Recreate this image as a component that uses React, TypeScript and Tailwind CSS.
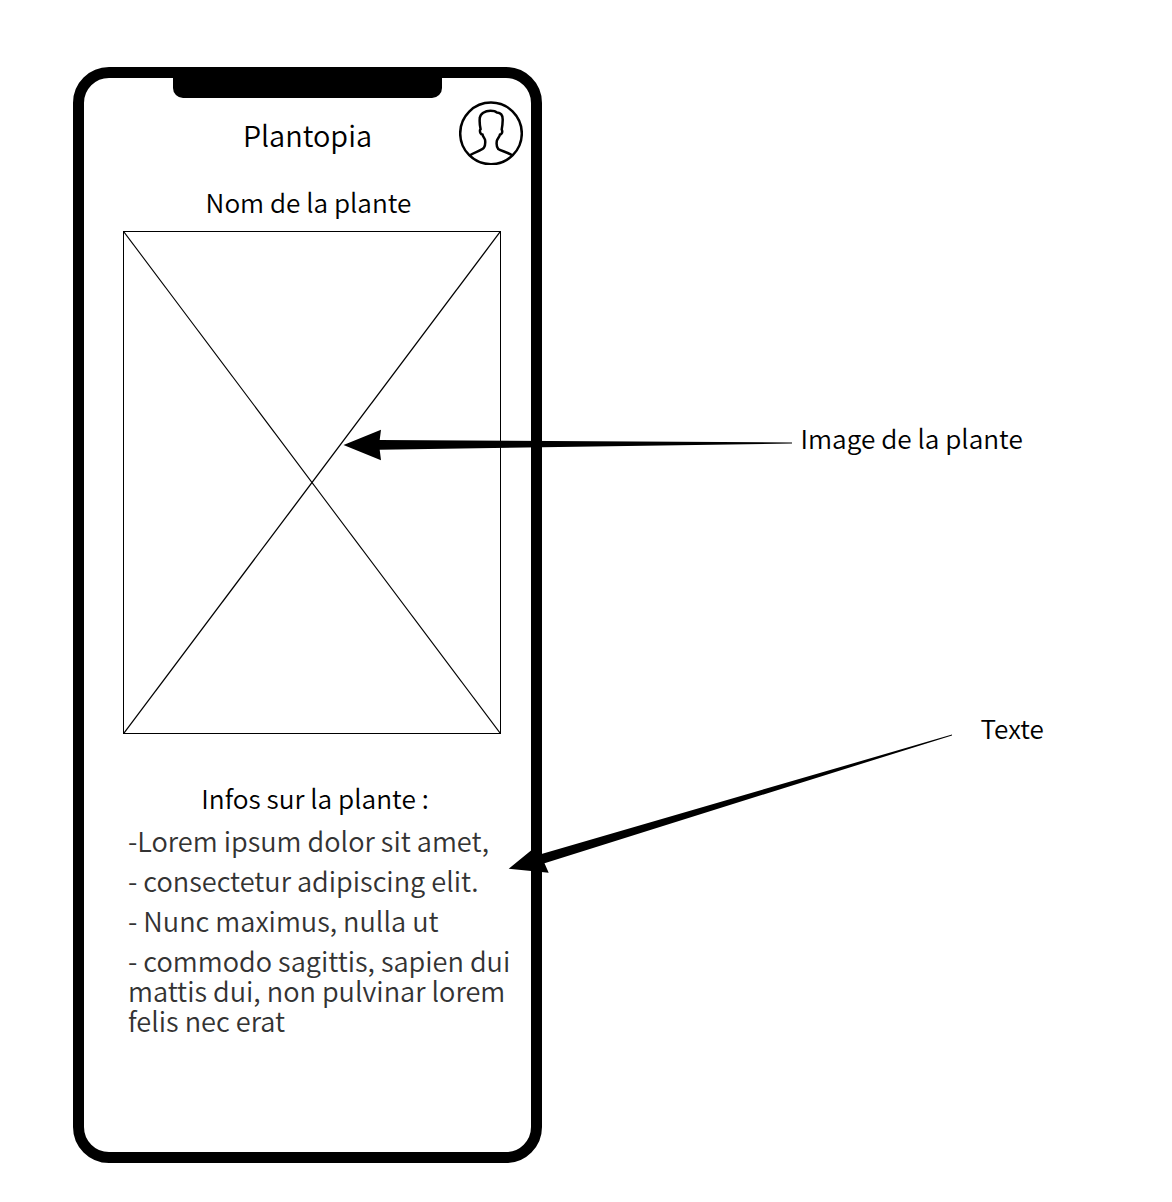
const lines = [
  "-Lorem ipsum dolor sit amet,",
  "- consectetur adipiscing elit.",
  "- Nunc maximus, nulla ut",
];

function Avatar() {
  return (
    <svg
      className="absolute top-[23px] right-[8px] size-16"
      viewBox="0 0 64 64"
      fill="none"
      stroke="black"
      strokeWidth="2.5"
      strokeLinejoin="round"
    >
      <circle cx="32" cy="32.4" r="30.8" />
      <path d="M11 54.3C15.5 51 22.5 50 25 46.5C26.7 44 26.3 42 26.1 39C25.5 36.8 23.8 35.5 23.6 33.6C21.6 33.8 20.6 31 21.1 28.8L21.6 28.2C20.8 24.5 20.4 20.5 20.8 17C21.2 12.5 26 9.8 31.5 9.8C34.5 9.8 36.5 10.2 38 11.6C42 11.8 43.8 15 43.7 19C43.6 22.5 43.4 25.5 42.7 28.5C44 31 42.6 33.6 40.9 33.6C40.6 36 38.2 37.8 37.8 40C37.6 42.5 36.9 45 39.2 48C42.5 50.3 48.5 51 53.2 54.3" />
    </svg>
  );
}

function ImagePlaceholder() {
  return (
    <div className="ml-[39px] mt-[14px] h-[503px] w-[378px] border border-black">
      <svg className="size-full" viewBox="0 0 376 501" fill="none" stroke="black" strokeWidth="1.1">
        <path d="M0 0L376 501" />
        <path d="M376 0L0 501" strokeWidth="1.3" />
      </svg>
    </div>
  );
}

function Phone() {
  return (
    <div className="relative flex h-[1096px] w-[469px] flex-col rounded-[36px] border-[11px] border-black bg-white">
      <div className="ml-[89px] h-5 w-[269px] rounded-b-[10px] bg-black" />
      <Avatar />
      <h1 className="mt-[21px] text-center text-[28.9px] leading-[30px]">Plantopia</h1>
      <h2 className="mt-[38px] pl-[2px] text-center text-[26.15px] leading-[30px]">Nom de la plante</h2>
      <ImagePlaceholder />
      <h2 className="mt-[49px] pl-[15px] text-center text-[26.25px] leading-[30px]">Infos sur la plante :</h2>
      <div className="ml-[44px] mt-[13px] flex flex-col gap-[10px] whitespace-nowrap text-[27.13px] leading-[30px] text-[#333]">
        {lines.map((line) => (
          <p key={line}>{line}</p>
        ))}
        <p>
          - commodo sagittis, sapien dui
          <br />
          mattis dui, non pulvinar lorem
          <br />
          felis nec erat
        </p>
      </div>
    </div>
  );
}

export default function App() {
  return (
    <main className="relative h-[1202px] w-[1172px] overflow-hidden bg-white pl-[73px] pt-[67px] font-[350] text-black [font-family:'Noto_Sans_CJK_SC',sans-serif]">
      <Phone />
      <svg className="pointer-events-none absolute inset-0 size-full" viewBox="0 0 1172 1202" fill="black">
        <path d="M343.5 445L381 429.8L379.7 440L792 442.5V443.5L379.7 449.7L381 460.2Z" />
        <path d="M508.7 868.8L539.6 843.6L541.5 853.9L952 734.6V735.4L544.5 863.2L548.7 872.8Z" />
      </svg>
      <p className="absolute left-[800.5px] top-[423px] whitespace-nowrap text-[26.2px] leading-[30px]">Image de la plante</p>
      <p className="absolute left-[980.5px] top-[713px] whitespace-nowrap text-[26.1px] leading-[30px]">Texte</p>
    </main>
  );
}
